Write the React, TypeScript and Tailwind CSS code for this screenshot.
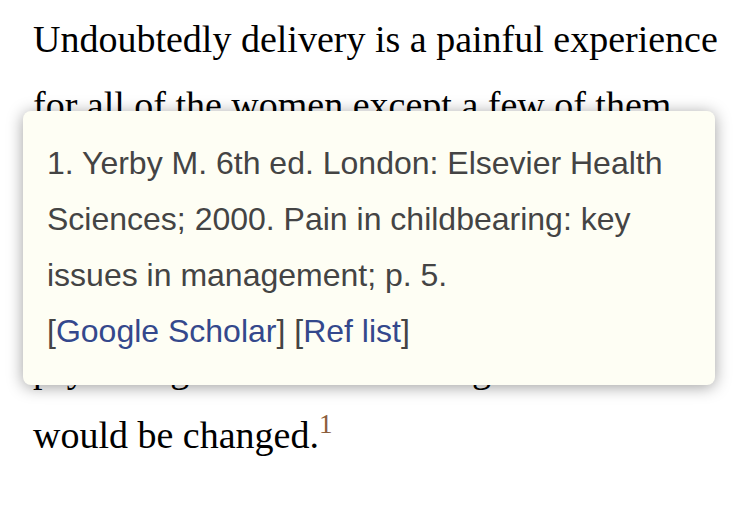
const App = () => {
  return (
    <div className="relative h-[513px] w-[750px] overflow-hidden bg-white">
      <p className="pl-[33px] pt-[6px] font-['Liberation_Serif',serif] text-[38px] leading-[66px] text-black whitespace-nowrap">
        Undoubtedly delivery is a painful experience
        <br />
        for all of the women except a few of them
        <br />
        and the pain of labor is the most severe
        <br />
        pain that women ever suffer. During labor
        <br />
        the pain causes stress and so the whole
        <br />
        psychological state of the stage of labor
        <br />
        would be changed.
        <span className="align-[15px] text-[27px] leading-none text-[#8b5e3c]">1</span>
      </p>

      {/* reference popup */}
      <div className="absolute left-[23px] top-[111px] h-[274px] w-[692px] rounded-lg bg-[#fefef4] px-6 pt-6 shadow-[0_2px_16px_rgba(0,0,0,0.38)] font-['Liberation_Sans',Arial,sans-serif] text-[32px] leading-[56px] text-[#444]">
        <div>1. Yerby M. 6th ed. London: Elsevier Health Sciences; 2000. Pain in childbearing: key issues in management; p. 5.</div>
        <div>
          [<a href="#" className="text-[#34488c]">Google Scholar</a>] [<a href="#" className="text-[#34488c]">Ref list</a>]
        </div>
      </div>
    </div>
  );
};

export default App;
